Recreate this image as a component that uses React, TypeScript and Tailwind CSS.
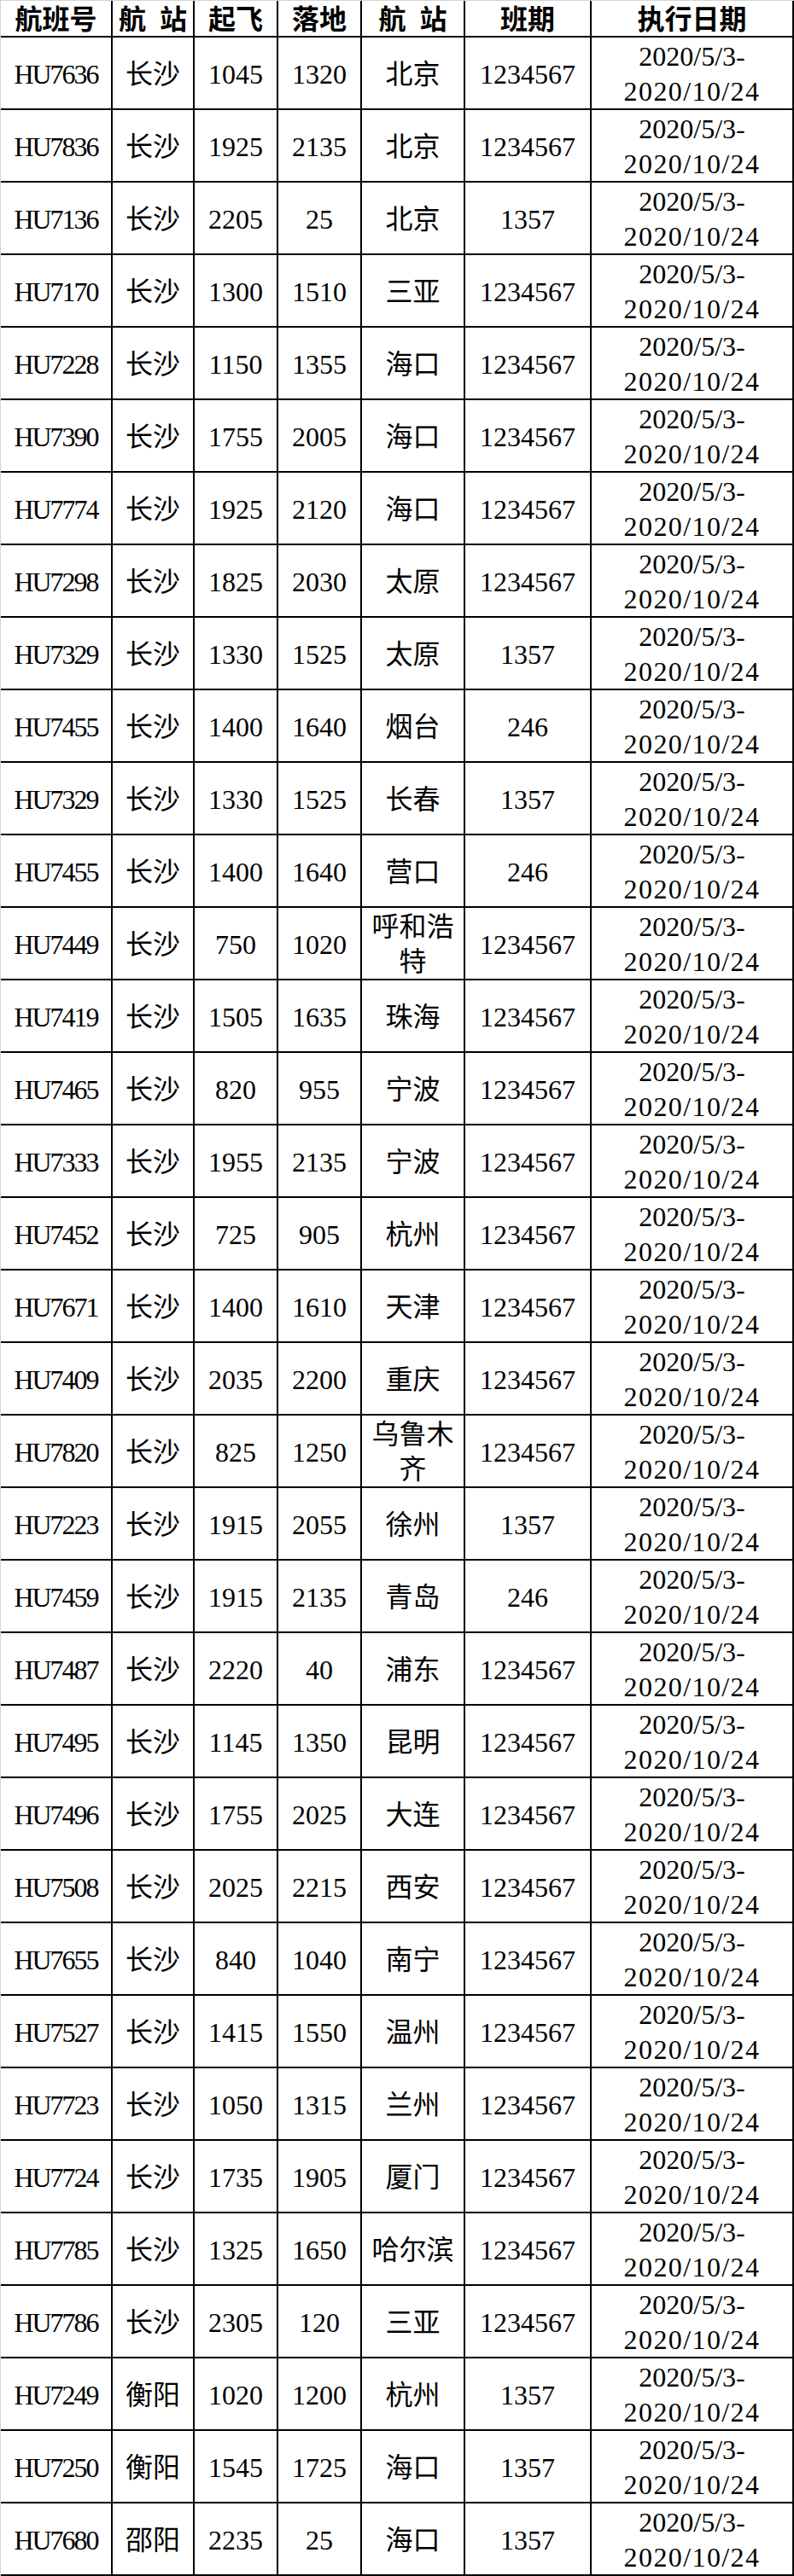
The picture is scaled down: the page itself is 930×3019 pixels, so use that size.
const flights: [string, string, string, string, string, string][] = [
  ["HU7636", "长沙", "1045", "1320", "北京", "1234567"],
  ["HU7836", "长沙", "1925", "2135", "北京", "1234567"],
  ["HU7136", "长沙", "2205", "25", "北京", "1357"],
  ["HU7170", "长沙", "1300", "1510", "三亚", "1234567"],
  ["HU7228", "长沙", "1150", "1355", "海口", "1234567"],
  ["HU7390", "长沙", "1755", "2005", "海口", "1234567"],
  ["HU7774", "长沙", "1925", "2120", "海口", "1234567"],
  ["HU7298", "长沙", "1825", "2030", "太原", "1234567"],
  ["HU7329", "长沙", "1330", "1525", "太原", "1357"],
  ["HU7455", "长沙", "1400", "1640", "烟台", "246"],
  ["HU7329", "长沙", "1330", "1525", "长春", "1357"],
  ["HU7455", "长沙", "1400", "1640", "营口", "246"],
  ["HU7449", "长沙", "750", "1020", "呼和浩特", "1234567"],
  ["HU7419", "长沙", "1505", "1635", "珠海", "1234567"],
  ["HU7465", "长沙", "820", "955", "宁波", "1234567"],
  ["HU7333", "长沙", "1955", "2135", "宁波", "1234567"],
  ["HU7452", "长沙", "725", "905", "杭州", "1234567"],
  ["HU7671", "长沙", "1400", "1610", "天津", "1234567"],
  ["HU7409", "长沙", "2035", "2200", "重庆", "1234567"],
  ["HU7820", "长沙", "825", "1250", "乌鲁木齐", "1234567"],
  ["HU7223", "长沙", "1915", "2055", "徐州", "1357"],
  ["HU7459", "长沙", "1915", "2135", "青岛", "246"],
  ["HU7487", "长沙", "2220", "40", "浦东", "1234567"],
  ["HU7495", "长沙", "1145", "1350", "昆明", "1234567"],
  ["HU7496", "长沙", "1755", "2025", "大连", "1234567"],
  ["HU7508", "长沙", "2025", "2215", "西安", "1234567"],
  ["HU7655", "长沙", "840", "1040", "南宁", "1234567"],
  ["HU7527", "长沙", "1415", "1550", "温州", "1234567"],
  ["HU7723", "长沙", "1050", "1315", "兰州", "1234567"],
  ["HU7724", "长沙", "1735", "1905", "厦门", "1234567"],
  ["HU7785", "长沙", "1325", "1650", "哈尔滨", "1234567"],
  ["HU7786", "长沙", "2305", "120", "三亚", "1234567"],
  ["HU7249", "衡阳", "1020", "1200", "杭州", "1357"],
  ["HU7250", "衡阳", "1545", "1725", "海口", "1357"],
  ["HU7680", "邵阳", "2235", "25", "海口", "1357"],
];

const headers = ["航班号", "航 站", "起飞", "落地", "航 站", "班期", "执行日期"];

const cell =
  "flex items-center justify-center border-r-2 border-b-2 border-black text-center";

export default function App() {
  return (
    <div className="w-[930px] bg-white font-['Liberation_Serif','Noto_Sans_CJK_SC',serif] text-[32px] text-black">
      <div className="grid grid-cols-[131px_96px_98px_98px_121px_148px_237px] border-t border-l border-[#d4d4d4]">
        {headers.map((h, i) => (
          <div
            key={i}
            className={`${cell} h-[43px] pt-[3px] font-bold leading-none [word-spacing:8px]`}
          >
            {h}
          </div>
        ))}

        {flights.map((f, r) => (
          <div key={r} className="contents">
            <div className={`${cell} h-[85px] pt-[3px] tracking-[-2px]`}>{f[0]}</div>
            <div className={`${cell} h-[85px] pt-[3px]`}>{f[1]}</div>
            <div className={`${cell} h-[85px] pt-[3px]`}>{f[2]}</div>
            <div className={`${cell} h-[85px] pt-[3px]`}>{f[3]}</div>
            <div className={`${cell} h-[85px] px-1 pt-[3px] leading-[41px]`}>{f[4]}</div>
            <div className={`${cell} h-[85px] pt-[3px]`}>{f[5]}</div>
            <div className={`${cell} h-[85px] flex-col pt-[3px] leading-[41px]`}>
              <span>2020/5/3-</span>
              <span className="tracking-[1.4px]">2020/10/24</span>
            </div>
          </div>
        ))}
      </div>
    </div>
  );
}
